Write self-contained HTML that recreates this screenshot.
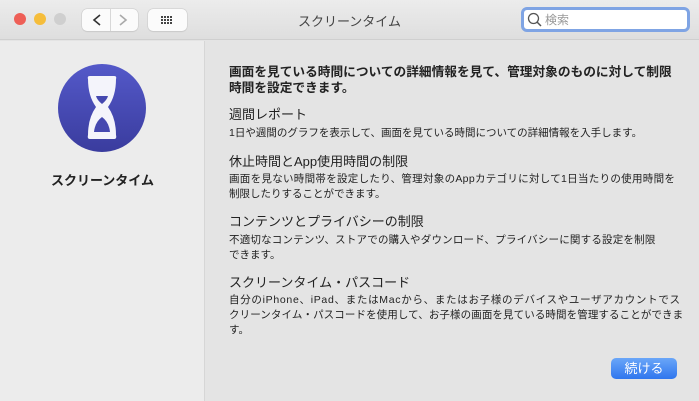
<!DOCTYPE html>
<html><head><meta charset="utf-8"><style>
*{margin:0;padding:0;box-sizing:border-box}
body{width:699px;height:401px;overflow:hidden;background:#e4e4e4;font-family:"Liberation Sans","Noto Sans CJK JP",sans-serif;color:#222;position:relative}
.tb{position:absolute;left:0;top:0;width:699px;height:40px;background:linear-gradient(#ececec,#dedede);border-bottom:1px solid #cfcfcf}
.dot{position:absolute;top:13px;width:12px;height:12px;border-radius:50%}
.btn{position:absolute;top:9px;height:22px;background:#fbfbfb;border-radius:5px;box-shadow:0 0 0 0.5px #c8c8c8,0 1px 1px rgba(0,0,0,.1)}
.title{position:absolute;top:11px;left:0;width:699px;text-align:center;font-size:13px;color:#444}
.search{position:absolute;left:521px;top:7px;width:169px;height:25px;border-radius:6px;background:#fff;border:3px solid #7fa4e4;font-size:12px;color:#999;padding:2px 0 0 21px;line-height:16px}
.side{position:absolute;left:0;top:41px;width:205px;height:360px;background:#ececec;border-right:1px solid #d6d6d6}
.t{position:absolute;white-space:nowrap}
.h{font-size:13px;color:#222}
.b{font-size:10.5px;color:#222}
</style></head><body>
<div class="tb">
<div class="dot" style="left:14px;background:#ee5f57"></div>
<div class="dot" style="left:34px;background:#f5bd3b"></div>
<div class="dot" style="left:54px;background:#cfcfcf"></div>
<div class="btn" style="left:82px;width:56px"></div>
<div style="position:absolute;left:110px;top:9px;width:1px;height:22px;background:#d8d8d8"></div>
<svg style="position:absolute;left:82px;top:9px" width="56" height="22"><path d="M18 6 L12 11 L18 16" stroke="#333" stroke-width="1.6" fill="none"/><path d="M38 6 L44 11 L38 16" stroke="#aaa" stroke-width="1.6" fill="none"/></svg>
<div class="btn" style="left:148px;width:39px"></div>
<svg style="position:absolute;left:148px;top:9px" width="39" height="22"><g fill="#444"><rect x="13" y="7" width="2" height="2"/><rect x="16" y="7" width="2" height="2"/><rect x="19" y="7" width="2" height="2"/><rect x="22" y="7" width="2" height="2"/><rect x="13" y="10" width="2" height="2"/><rect x="16" y="10" width="2" height="2"/><rect x="19" y="10" width="2" height="2"/><rect x="22" y="10" width="2" height="2"/><rect x="13" y="13" width="2" height="2"/><rect x="16" y="13" width="2" height="2"/><rect x="19" y="13" width="2" height="2"/><rect x="22" y="13" width="2" height="2"/></g></svg>
<div class="title">スクリーンタイム</div>
<div class="search">検索</div>
<svg style="position:absolute;left:527px;top:12px" width="16" height="16"><circle cx="6.5" cy="6.5" r="5" stroke="#555" stroke-width="1.3" fill="none"/><path d="M10 10 L14 14" stroke="#555" stroke-width="1.5"/></svg>
</div>
<div class="side">
<svg style="position:absolute;left:57px;top:22px" width="90" height="90"><defs><linearGradient id="g" x1="0" y1="0" x2="0" y2="1"><stop offset="0" stop-color="#5459c9"/><stop offset="1" stop-color="#3a3c9e"/></linearGradient></defs><circle cx="45" cy="45" r="44" fill="url(#g)"/>
<path d="M31 16 Q30 13 33 13 H57 Q60 13 59 16 Q59 33 51 44 Q59 55 59 72 Q60 76 57 76 H33 Q30 76 31 72 Q31 55 39 44 Q31 33 31 16 Z" fill="#f4f4fb"/>
<path d="M39 33 H51 Q50 37 45 41 Q40 37 39 33 Z M37 69 H53 Q52 59 45 54 Q38 59 37 69 Z" fill="#4548b0"/></svg>
<div class="t" style="left:0;width:205px;text-align:center;top:129px;font-size:13px;font-weight:bold">スクリーンタイム</div>
</div>
<div class="t h" style="left:229px;top:64px;font-weight:bold;line-height:16px;font-size:12.7px">画面を見ている時間についての詳細情報を見て、管理対象のものに対して制限<br>時間を設定できます。</div>
<div class="t h" style="left:229px;top:104px">週間レポート</div>
<div class="t b" style="left:229px;top:125px">1日や週間のグラフを表示して、画面を見ている時間についての詳細情報を入手します。</div>
<div class="t h" style="left:229px;top:151px">休止時間とApp使用時間の制限</div>
<div class="t b" style="left:229px;top:172px;line-height:15px"><span style="letter-spacing:0.3px">画面を見ない時間帯を設定したり、管理対象のAppカテゴリに対して1日当たりの使用時間を</span><br>制限したりすることができます。</div>
<div class="t h" style="left:229px;top:211px">コンテンツとプライバシーの制限</div>
<div class="t b" style="left:229px;top:233px;line-height:15px"><span style="letter-spacing:0.2px">不適切なコンテンツ、ストアでの購入やダウンロード、プライバシーに関する設定を制限</span><br>できます。</div>
<div class="t h" style="left:229px;top:272px">スクリーンタイム・パスコード</div>
<div class="t b" style="left:229px;top:293px;line-height:15px"><span style="letter-spacing:0.7px">自分のiPhone、iPad、またはMacから、またはお子様のデバイスやユーザアカウントでス</span><br><span style="letter-spacing:0.1px">クリーンタイム・パスコードを使用して、お子様の画面を見ている時間を管理することができま</span><br>す。</div>
<div style="position:absolute;left:611px;top:358px;width:66px;height:21px;border-radius:5px;background:linear-gradient(#6aa6f8,#2f76ee);color:#fff;font-size:13px;text-align:center;line-height:21px">続ける</div>
</body></html>
